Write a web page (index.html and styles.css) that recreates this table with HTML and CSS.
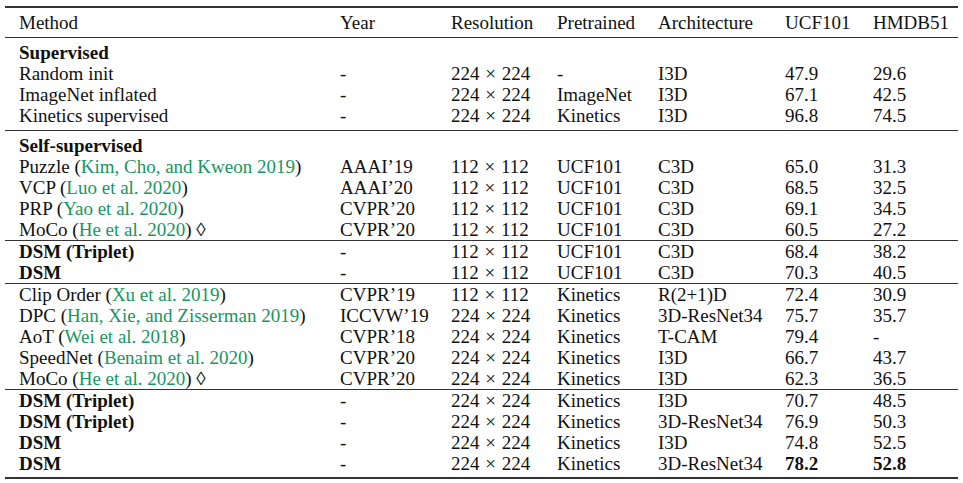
FILE: index.html
```html
<!DOCTYPE html>
<html>
<head>
<meta charset="utf-8">
<link rel="stylesheet" href="styles.css">
</head>
<body>
<table class="results">
  <colgroup>
    <col class="c-method"><col class="c-year"><col class="c-res"><col class="c-pre"><col class="c-arch"><col class="c-ucf"><col class="c-hmdb">
  </colgroup>
  <thead>
    <tr>
      <th>Method</th><th>Year</th><th>Resolution</th><th>Pretrained</th><th>Architecture</th><th>UCF101</th><th>HMDB51</th>
    </tr>
  </thead>
  <tbody class="grp">
    <tr class="first"><td class="b" colspan="7">Supervised</td></tr>
    <tr><td>Random init</td><td>-</td><td>224 <span class="x">×</span> 224</td><td>-</td><td>I3D</td><td>47.9</td><td>29.6</td></tr>
    <tr><td>ImageNet inflated</td><td>-</td><td>224 <span class="x">×</span> 224</td><td>ImageNet</td><td>I3D</td><td>67.1</td><td>42.5</td></tr>
    <tr class="last"><td>Kinetics supervised</td><td>-</td><td>224 <span class="x">×</span> 224</td><td>Kinetics</td><td>I3D</td><td>96.8</td><td>74.5</td></tr>
  </tbody>
  <tbody class="grp">
    <tr class="first"><td class="b" colspan="7">Self-supervised</td></tr>
    <tr><td>Puzzle (<span class="cite">Kim, Cho, and Kweon 2019</span>)</td><td>AAAI’19</td><td>112 <span class="x">×</span> 112</td><td>UCF101</td><td>C3D</td><td>65.0</td><td>31.3</td></tr>
    <tr><td>VCP (<span class="cite">Luo et al. 2020</span>)</td><td>AAAI’20</td><td>112 <span class="x">×</span> 112</td><td>UCF101</td><td>C3D</td><td>68.5</td><td>32.5</td></tr>
    <tr><td>PRP (<span class="cite">Yao et al. 2020</span>)</td><td>CVPR’20</td><td>112 <span class="x">×</span> 112</td><td>UCF101</td><td>C3D</td><td>69.1</td><td>34.5</td></tr>
    <tr><td>MoCo (<span class="cite">He et al. 2020</span>) ◊</td><td>CVPR’20</td><td>112 <span class="x">×</span> 112</td><td>UCF101</td><td>C3D</td><td>60.5</td><td>27.2</td></tr>
  </tbody>
  <tbody class="grp">
    <tr><td class="b">DSM (Triplet)</td><td>-</td><td>112 <span class="x">×</span> 112</td><td>UCF101</td><td>C3D</td><td>68.4</td><td>38.2</td></tr>
    <tr><td class="b">DSM</td><td>-</td><td>112 <span class="x">×</span> 112</td><td>UCF101</td><td>C3D</td><td>70.3</td><td>40.5</td></tr>
  </tbody>
  <tbody class="grp">
    <tr><td>Clip Order (<span class="cite">Xu et al. 2019</span>)</td><td>CVPR’19</td><td>112 <span class="x">×</span> 112</td><td>Kinetics</td><td>R(2+1)D</td><td>72.4</td><td>30.9</td></tr>
    <tr><td>DPC (<span class="cite">Han, Xie, and Zisserman 2019</span>)</td><td>ICCVW’19</td><td>224 <span class="x">×</span> 224</td><td>Kinetics</td><td>3D-ResNet34</td><td>75.7</td><td>35.7</td></tr>
    <tr><td>AoT (<span class="cite">Wei et al. 2018</span>)</td><td>CVPR’18</td><td>224 <span class="x">×</span> 224</td><td>Kinetics</td><td>T-CAM</td><td>79.4</td><td>-</td></tr>
    <tr><td>SpeedNet (<span class="cite">Benaim et al. 2020</span>)</td><td>CVPR’20</td><td>224 <span class="x">×</span> 224</td><td>Kinetics</td><td>I3D</td><td>66.7</td><td>43.7</td></tr>
    <tr><td>MoCo (<span class="cite">He et al. 2020</span>) ◊</td><td>CVPR’20</td><td>224 <span class="x">×</span> 224</td><td>Kinetics</td><td>I3D</td><td>62.3</td><td>36.5</td></tr>
  </tbody>
  <tbody class="grp final">
    <tr><td class="b">DSM (Triplet)</td><td>-</td><td>224 <span class="x">×</span> 224</td><td>Kinetics</td><td>I3D</td><td>70.7</td><td>48.5</td></tr>
    <tr><td class="b">DSM (Triplet)</td><td>-</td><td>224 <span class="x">×</span> 224</td><td>Kinetics</td><td>3D-ResNet34</td><td>76.9</td><td>50.3</td></tr>
    <tr><td class="b">DSM</td><td>-</td><td>224 <span class="x">×</span> 224</td><td>Kinetics</td><td>I3D</td><td>74.8</td><td>52.5</td></tr>
    <tr class="last"><td class="b">DSM</td><td>-</td><td>224 <span class="x">×</span> 224</td><td>Kinetics</td><td>3D-ResNet34</td><td class="b">78.2</td><td class="b">52.8</td></tr>
  </tbody>
</table>
</body>
</html>
```

FILE: styles.css
```css
html, body {
  margin: 0;
  padding: 0;
  background: #ffffff;
}

body {
  font-family: "Liberation Serif", "Times New Roman", serif;
  font-size: 19px;
  line-height: 21px;
  color: #111111;
}

.results {
  border-collapse: collapse;
  table-layout: fixed;
  width: 953px;
  margin: 6px 0 0 5px;
  border-top: 2px solid #333333;
  border-bottom: 2px solid #333333;
}

.c-method { width: 329px; }
.c-year { width: 111px; }
.c-res { width: 106px; }
.c-pre { width: 101px; }
.c-arch { width: 127px; }
.c-ucf { width: 88px; }
.c-hmdb { width: 91px; }

.results th,
.results td {
  padding: 0 6px;
  text-align: left;
  white-space: nowrap;
  font-weight: normal;
  height: 21px;
}

.results th:first-child,
.results td:first-child {
  padding-left: 14px;
}

.results thead th {
  padding-top: 4px;
  padding-bottom: 4px;
  border-bottom: 1px solid #333333;
}

.grp {
  border-top: 1px solid #333333;
}

.grp .first td {
  padding-top: 4px;
}

.grp .last td {
  padding-bottom: 4px;
}

.grp.final .last td {
  padding-bottom: 3px;
}

.results .b {
  font-weight: bold;
}

.x {
  margin: 0 1px;
}

.cite {
  color: #17965f;
}
```
